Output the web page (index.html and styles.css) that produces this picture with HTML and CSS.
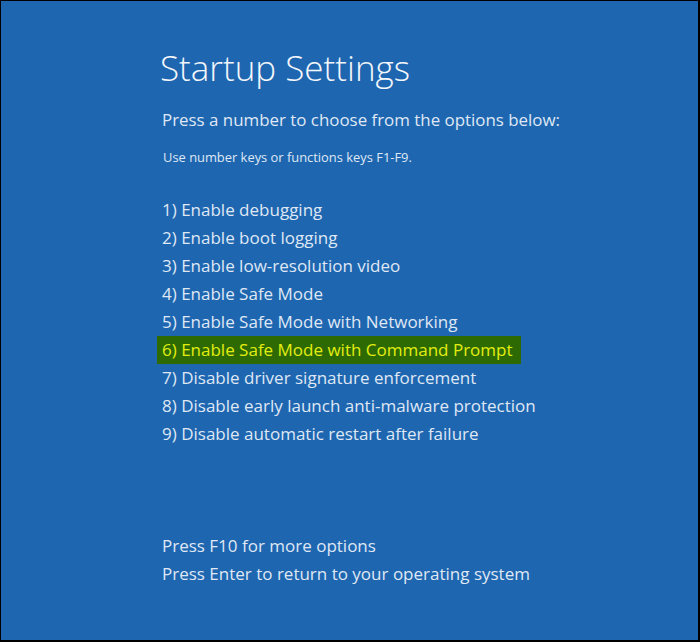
FILE: index.html
```html
<!DOCTYPE html>
<html>
<head>
<meta charset="utf-8">
<link rel="stylesheet" href="styles.css">
</head>
<body>
<div class="screen">
  <div class="content">
    <h1 class="title">Startup Settings</h1>
    <p class="lead">Press a number to choose from the options below:</p>
    <p class="hint">Use number keys or functions keys F1-F9.</p>
    <ul class="options">
      <li>1) Enable debugging</li>
      <li>2) Enable boot logging</li>
      <li>3) Enable low-resolution video</li>
      <li>4) Enable Safe Mode</li>
      <li>5) Enable Safe Mode with Networking</li>
      <li class="selected">6) Enable Safe Mode with Command Prompt</li>
      <li>7) Disable driver signature enforcement</li>
      <li>8) Disable early launch anti-malware protection</li>
      <li>9) Disable automatic restart after failure</li>
    </ul>
    <div class="footer">
      <p>Press F10 for more options</p>
      <p>Press Enter to return to your operating system</p>
    </div>
  </div>
</div>
</body>
</html>
```
FILE: styles.css
```css
html, body {
  margin: 0;
  padding: 0;
  background: #000;
}
.screen {
  box-sizing: border-box;
  width: 700px;
  height: 642px;
  background: #1f66b0;
  border-top: 1px solid #000;
  border-left: 1px solid #000;
  border-right: 2px solid #000;
  border-bottom: 2px solid #000;
  font-family: "Open Sans", "Noto Sans", sans-serif;
  color: #dfe8f4;
}
.content {
  padding: 44px 0 0 159px;
}
.title {
  margin: 0;
  font-weight: 300;
  font-size: 35px;
  line-height: 46px;
  color: #f4f7fb;
}
.lead {
  margin: 17px 0 0 2px;
  font-size: 16.9px;
  line-height: 24px;
}
.hint {
  margin: 16px 0 0 3px;
  font-size: 12.9px;
  line-height: 18px;
}
.options {
  list-style: none;
  margin: 30px 0 0 0;
  padding: 0;
  font-size: 17px;
}
.options li {
  height: 28px;
  line-height: 28px;
  padding-left: 2px;
}
.options li.selected {
  background: #2e6a04;
  color: #e2ee10;
  margin-left: -3px;
  padding-left: 5px;
  width: 364px;
  box-sizing: border-box;
}
.footer {
  margin-top: 84px;
  font-size: 17px;
}
.footer p {
  margin: 0;
  line-height: 28px;
  padding-left: 2px;
}
```
